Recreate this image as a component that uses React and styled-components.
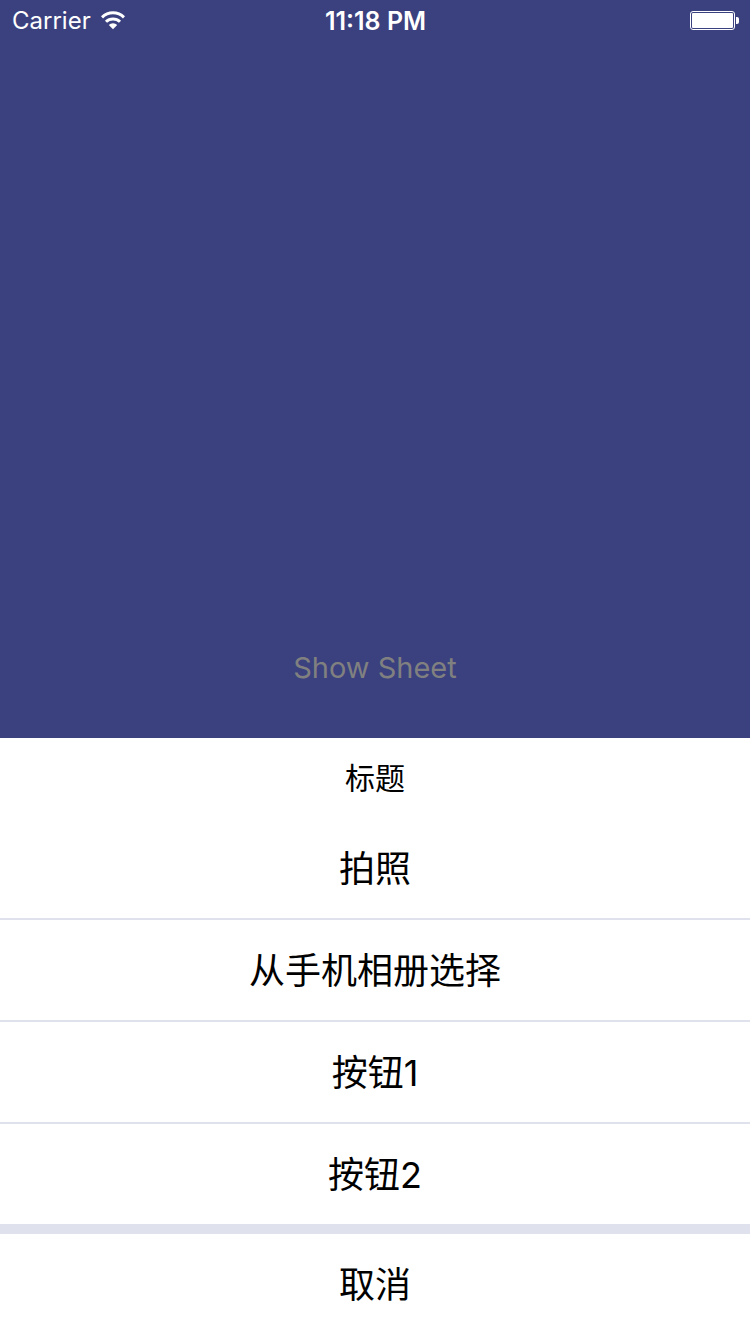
import React from "react";
import styled, { createGlobalStyle } from "styled-components";

const GlobalStyle = createGlobalStyle`
  * { box-sizing: border-box; }
  body { margin: 0; background: #3b417e; }
`;

const Screen = styled.div`
  min-height: 100vh;
  display: flex;
  flex-direction: column;
  background: #3b417e;
  font-family: Inter, "Noto Sans CJK SC", sans-serif;
`;

const StatusBar = styled.header`
  display: grid;
  grid-template-columns: 1fr auto 1fr;
  align-items: center;
  height: 42px;
  padding: 0 11px 0 12px;
  color: #fff;
  line-height: 42px;
`;

const Carrier = styled.div`
  display: flex;
  align-items: center;
  gap: 10px;
  font-size: 24px;
`;

const Clock = styled.time`
  font-size: 25px;
  font-weight: 600;
`;

const Battery = styled.svg`
  justify-self: end;
`;

const Content = styled.main`
  flex: 1;
  display: flex;
  flex-direction: column;
  justify-content: flex-end;
  align-items: center;
  padding-bottom: 48px;
`;

const ShowButton = styled.button`
  border: 0;
  padding: 0;
  background: none;
  color: #808080;
  font-family: inherit;
  font-size: 29px;
  line-height: 44px;
`;

const Sheet = styled.section`
  background: #dfe1ed;
  text-align: center;
`;

const SheetTitle = styled.h2`
  margin: 0;
  background: #fff;
  color: #000;
  font-size: 30px;
  font-weight: 400;
  line-height: 80px;
`;

const Options = styled.div`
  display: flex;
  flex-direction: column;
  gap: 2px;
  margin-bottom: 10px;
`;

const SheetButton = styled.button`
  display: block;
  width: 100%;
  border: 0;
  padding: 2px 0 0;
  background: #fff;
  color: #000;
  font-family: inherit;
  font-size: 36px;
  line-height: 98px;
`;

const options = ["拍照", "从手机相册选择", "按钮1", "按钮2"];

export default function App() {
  return (
    <Screen>
      <GlobalStyle />
      <StatusBar>
        <Carrier>
          Carrier
          <svg width="24" height="20" viewBox="0 0 24 20" fill="none" stroke="#fff" strokeWidth="3" aria-hidden="true">
            <path d="M1 6.3a15.8 15.8 0 0 1 22 0" />
            <path d="M5 10.8a10 10 0 0 1 14 0" />
            <path d="M12 18.2l-4.2-4.2a6 6 0 0 1 8.4 0z" fill="#fff" stroke="none" />
          </svg>
        </Carrier>
        <Clock>11:18 PM</Clock>
        <Battery width="49" height="20" viewBox="0 0 49 20" role="img" aria-label="Battery full">
          <rect x="0.5" y="0.5" width="44" height="18" rx="2.5" fill="none" stroke="#fff" />
          <rect x="2" y="2" width="41" height="15" rx="1" fill="#fff" />
          <path d="M46 6h1a2 2 0 0 1 2 2v3a2 2 0 0 1-2 2h-1z" fill="#fff" />
        </Battery>
      </StatusBar>
      <Content>
        <ShowButton type="button">Show Sheet</ShowButton>
      </Content>
      <Sheet role="dialog" aria-labelledby="sheet-title">
        <SheetTitle id="sheet-title">标题</SheetTitle>
        <Options>
          {options.map((label) => (
            <SheetButton type="button" key={label}>{label}</SheetButton>
          ))}
        </Options>
        <SheetButton type="button">取消</SheetButton>
      </Sheet>
    </Screen>
  );
}
